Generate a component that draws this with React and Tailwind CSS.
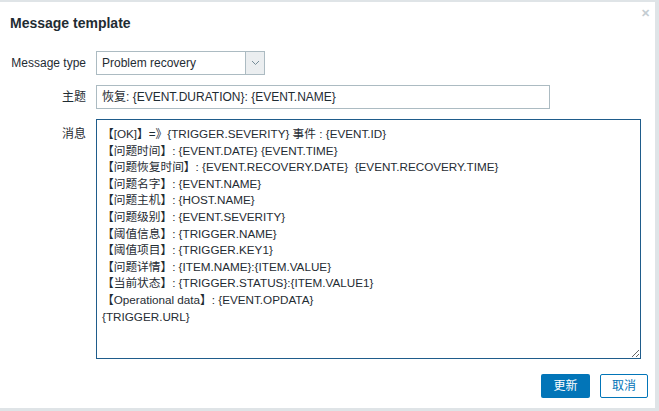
const MESSAGE = `【[OK]】=》{TRIGGER.SEVERITY} 事件 : {EVENT.ID}
【问题时间】: {EVENT.DATE} {EVENT.TIME}
【问题恢复时间】: {EVENT.RECOVERY.DATE}  {EVENT.RECOVERY.TIME}
【问题名字】: {EVENT.NAME}
【问题主机】: {HOST.NAME}
【问题级别】: {EVENT.SEVERITY}
【阈值信息】: {TRIGGER.NAME}
【阈值项目】: {TRIGGER.KEY1}
【问题详情】: {ITEM.NAME}:{ITEM.VALUE}
【当前状态】: {TRIGGER.STATUS}:{ITEM.VALUE1}
【Operational data】: {EVENT.OPDATA}
{TRIGGER.URL}`;

const font = "font-['Liberation_Sans','Noto_Sans_CJK_SC',sans-serif]";

export default function App() {
  return (
    <div className={`h-[411px] w-[659px] overflow-hidden bg-[#dfe4e7] pt-[2px] pr-[4px] pb-[3px] ${font}`}>
      <div className="relative flex h-full flex-col bg-white text-[12px] text-[#1f2c33]">
        {/* Header */}
        <div className="flex h-[42px] items-center pl-[10px]">
          <h4 className="text-[14px] font-bold text-[#1f2c33]">Message template</h4>
        </div>
        <button className="absolute right-[5px] top-[6px] text-[11px] font-bold leading-none text-[#c4cdd2]">
          ✕
        </button>

        {/* Form */}
        <div className="mt-[7px] grid grid-cols-[86px_1fr] gap-x-[10px] gap-y-[10px]">
          <label className="flex h-[24px] items-center justify-end">Message type</label>
          <div className="flex h-[24px] w-[169px] border border-[#acbbc2]">
            <div className="flex flex-1 items-center pl-[5px]">Problem recovery</div>
            <div className="flex w-[19px] items-center justify-center border-l border-[#acbbc2] bg-[#ebeef0]">
              <svg width="9" height="6" viewBox="0 0 9 6" fill="none">
                <path d="M1 1l3.5 3.5L8 1" stroke="#768d99" strokeWidth="1" />
              </svg>
            </div>
          </div>

          <label className="flex h-[24px] items-center justify-end">主题</label>
          <div className="flex h-[24px] w-[454px] items-center border border-[#acbbc2] pl-[5px]">
            恢复: {"{EVENT.DURATION}"}: {"{EVENT.NAME}"}
          </div>

          <label className="flex justify-end pt-[6px]">消息</label>
          <textarea
            readOnly
            defaultValue={MESSAGE}
            className="h-[240px] w-[545px] border border-[#1f5c8b] px-[5px] pt-[6px] pb-[6px] text-[11.7px] leading-[16.6px] text-[#1f2c33] outline-none"
          />
        </div>

        {/* Footer */}
        <div className="mt-auto mb-[10px] flex justify-end gap-[10px] pr-[7px]">
          <button className="h-[24px] w-[49px] rounded-[2px] bg-[#0275b8] text-[12px] text-white">更新</button>
          <button className="h-[24px] w-[48px] rounded-[2px] border border-[#0275b8] bg-white text-[12px] text-[#0275b8]">
            取消
          </button>
        </div>
      </div>
    </div>
  );
}
